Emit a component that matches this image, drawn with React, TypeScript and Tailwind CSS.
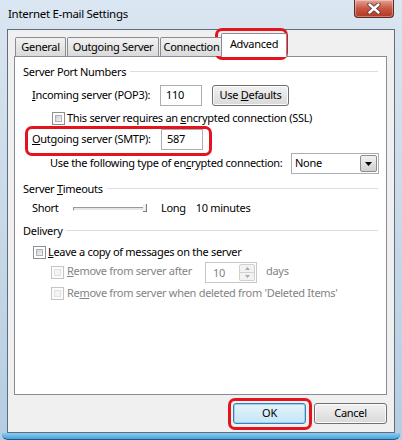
import React from 'react'

const font = { fontFamily: '"Noto Sans", "Open Sans", sans-serif' }

const Check = ({ disabled }: { disabled?: boolean }) => (
  <span
    className={
      disabled
        ? 'flex w-[13px] h-[13px] shrink-0 border border-[#c5c5c5] bg-[#fbfbfb] p-[2px]'
        : 'flex w-[13px] h-[13px] shrink-0 border border-[#8e8f8f] bg-white p-[2px]'
    }
  >
    <span
      className={
        disabled
          ? 'w-full h-full border border-[#e1e1e1] bg-[#f4f4f4]'
          : 'w-full h-full border border-[#aeb3b9] bg-linear-to-br from-[#cbcfd5] to-[#f6f6f6]'
      }
    />
  </span>
)

const GroupLabel = ({ children }: { children: React.ReactNode }) => (
  <div className="flex items-center h-[15px] pl-[8px] pr-[8px]">
    <span className="leading-none">{children}</span>
    <span className="flex-1 ml-[4px] h-px bg-[#d5dfe5]" />
  </div>
)

const Tab = ({ label, w }: { label: string; w: string }) => (
  <div
    className={`${w} h-[19px] flex items-center justify-center border border-b-0 border-[#898c95] rounded-t-[2px] bg-linear-to-b from-[#f2f2f2] to-[#dadada] overflow-hidden whitespace-nowrap`}
  >
    {label}
  </div>
)

const Button = ({ children, def }: { children: React.ReactNode; def?: boolean }) => (
  <div
    className={
      def
        ? 'w-[73px] h-[21px] flex items-center justify-center rounded-[3px] border border-[#3c7fb1] bg-linear-to-b from-[#e5f4fc] to-[#c4e5f6] shadow-[inset_0_0_0_1px_#9ad3f0]'
        : 'w-[73px] h-[21px] flex items-center justify-center rounded-[3px] border border-[#707070] bg-linear-to-b from-[#f2f2f2] to-[#d9d9d9] shadow-[inset_0_0_0_1px_#fbfbfb]'
    }
  >
    {children}
  </div>
)

const Mark = ({ className }: { className: string }) => (
  <div className={`absolute border-[3px] border-[#e4141e] rounded-[7px] pointer-events-none ${className}`} />
)

export default function App() {
  return (
    <div
      className="relative w-[402px] h-[440px] overflow-hidden flex flex-col bg-linear-to-b from-[#dae6f1] via-[#c8d9e8] to-[#b5cde2] text-[11px] tracking-[-0.3px] text-black"
      style={font}
    >
      {/* title bar */}
      <div className="h-[29px] flex items-start justify-between pl-[8px] pr-[8px] shrink-0">
        <span className="mt-[5px] text-[11.5px] leading-[17px]">Internet E-mail Settings</span>
        <div className="w-[40px] h-[18px] rounded-b-[4px] border border-t-0 border-[#5c2a22] bg-linear-to-b from-[#e4a194] via-[#c75643] to-[#b3361f] flex items-center justify-center shadow-[inset_0_0_0_1px_rgba(255,255,255,0.35)]">
          <svg width="14" height="11" viewBox="0 0 14 11">
            <path d="M2.5 1.5 L11.5 9.5 M11.5 1.5 L2.5 9.5" stroke="#5a3a36" strokeWidth="4.2" strokeLinecap="round" />
            <path d="M2.5 1.5 L11.5 9.5 M11.5 1.5 L2.5 9.5" stroke="#ffffff" strokeWidth="2.4" strokeLinecap="round" />
          </svg>
        </div>
      </div>

      {/* client area */}
      <div className="mx-[7px] h-[404px] shrink-0 border border-[#5f6e7d] bg-[#f0f0f0] flex flex-col pl-[6px] pr-[7px] pt-[3px]">
        {/* tabs */}
        <div className="relative z-10 flex items-end h-[23px] pl-[1px]">
          <Tab label="General" w="w-[51px]" />
          <div className="w-px" />
          <Tab label="Outgoing Server" w="w-[92px]" />
          <div className="w-px" />
          <Tab label="Connection" w="w-[63px]" />
          <div className="-ml-[2px] w-[66px] h-[24px] -mb-px flex items-center justify-center border border-b-0 border-[#898c95] rounded-t-[2px] bg-white pb-[3px]">
            Advanced
          </div>
        </div>

        {/* panel */}
        <div className="h-[339px] border border-[#898c95] bg-white flex flex-col pt-[7px]">
          <GroupLabel>Server Port Numbers</GroupLabel>

          <div className="mt-[6px] h-[21px] flex items-center pl-[17px]">
            <span className="w-[128px] whitespace-nowrap">
              <u>I</u>ncoming server (POP3):
            </span>
            <div className="w-[42px] h-[21px] border border-[#abadb3] flex items-center pl-[5px]">110</div>
            <div className="ml-[10px] w-[77px] h-[21px] flex items-center justify-center rounded-[3px] border border-[#707070] bg-linear-to-b from-[#f2f2f2] to-[#d9d9d9] shadow-[inset_0_0_0_1px_#fbfbfb]">
              Use&nbsp;<u>D</u>efaults
            </div>
          </div>

          <div className="mt-[5px] h-[15px] flex items-center pl-[37px]">
            <Check />
            <span className="ml-[2px] whitespace-nowrap">
              This server requires an <u>e</u>ncrypted connection (SSL)
            </span>
          </div>

          <div className="mt-[3px] h-[21px] flex items-center pl-[17px]">
            <span className="w-[129px] whitespace-nowrap">
              <u>O</u>utgoing server (SMTP):
            </span>
            <div className="w-[42px] h-[21px] border border-[#abadb3] flex items-center pl-[5px]">587</div>
          </div>

          <div className="mt-[3px] h-[21px] flex items-center pl-[35px]">
            <span className="w-[241px] whitespace-nowrap">
              Use the following type of en<u>c</u>rypted connection:
            </span>
            <div className="w-[88px] h-[21px] border border-[#abadb3] flex items-center justify-between pl-[3px] pr-[1px]">
              <span>None</span>
              <div className="w-[17px] h-[17px] rounded-[2px] border border-[#8d8d8d] bg-linear-to-b from-[#f2f2f2] to-[#cfcfcf] flex items-center justify-center">
                <svg width="7" height="4" viewBox="0 0 7 4">
                  <path d="M0 0 H7 L3.5 4 Z" fill="#000" />
                </svg>
              </div>
            </div>
          </div>

          <div className="mt-[7px]">
            <GroupLabel>
              Server <u>T</u>imeouts
            </GroupLabel>
          </div>

          <div className="mt-[5px] h-[15px] flex items-center pl-[17px]">
            <span className="w-[41px]">Short</span>
            <div className="relative w-[74px] h-[4px] border-t border-l border-[#9a9a9a] border-b border-b-white border-r border-r-white bg-[#e6e6e6]">
              <div className="absolute right-[-1px] top-[-4px] w-[4px] h-[8px] border-r border-b border-[#7a7a7a] bg-[#f0f0f0]" />
            </div>
            <span className="ml-[14px]">Long</span>
            <span className="ml-[10px]">10 minutes</span>
          </div>

          <div className="mt-[7px]">
            <GroupLabel>Delivery</GroupLabel>
          </div>

          <div className="mt-[7px] h-[15px] flex items-center pl-[18px]">
            <Check />
            <span className="ml-[2px] whitespace-nowrap">
              <u>L</u>eave a copy of messages on the server
            </span>
          </div>

          <div className="mt-[2px] h-[21px] flex items-center pl-[36px] text-[#838383]">
            <Check disabled />
            <span className="ml-[3px] w-[138px] whitespace-nowrap -mt-[3px]">
              <u>R</u>emove from server after
            </span>
            <div className="w-[52px] h-[21px] border border-[#c8c8c8] flex items-center justify-between pl-[7px] pr-[1px]">
              <span className="mt-[2px]">10</span>
              <div className="flex flex-col w-[16px] h-[17px]">
                <div className="h-[8.5px] border border-[#d0d0d0] rounded-t-[2px] bg-[#f2f2f2] flex items-center justify-center">
                  <svg width="5" height="3" viewBox="0 0 5 3">
                    <path d="M0 3 H5 L2.5 0 Z" fill="#a9a9a9" />
                  </svg>
                </div>
                <div className="h-[8.5px] border border-t-0 border-[#d0d0d0] rounded-b-[2px] bg-[#f2f2f2] flex items-center justify-center">
                  <svg width="5" height="3" viewBox="0 0 5 3">
                    <path d="M0 0 H5 L2.5 3 Z" fill="#a9a9a9" />
                  </svg>
                </div>
              </div>
            </div>
            <span className="ml-[9px] -mt-[3px]">days</span>
          </div>

          <div className="mt-[3px] h-[15px] flex items-center pl-[36px] text-[#838383]">
            <Check disabled />
            <span className="ml-[3px] whitespace-nowrap">
              Re<u>m</u>ove from server when deleted from 'Deleted Items'
            </span>
          </div>
        </div>

        {/* buttons */}
        <div className="mt-[8px] flex justify-end gap-[8px]">
          <Button def>OK</Button>
          <Button>Cancel</Button>
        </div>
      </div>

      {/* bottom glow */}
      <div className="flex-1 mx-[2px] rounded-b-[6px] bg-linear-to-b from-[#8fc9ec] to-[#3aa7e3] border-b border-[#2a5576]" />

      {/* red annotation marks */}
      <Mark className="left-[215px] top-[28px] w-[73px] h-[32px]" />
      <Mark className="left-[25px] top-[126px] w-[187px] h-[30px]" />
      <Mark className="left-[228px] top-[398px] w-[84px] h-[32px]" />
    </div>
  )
}
